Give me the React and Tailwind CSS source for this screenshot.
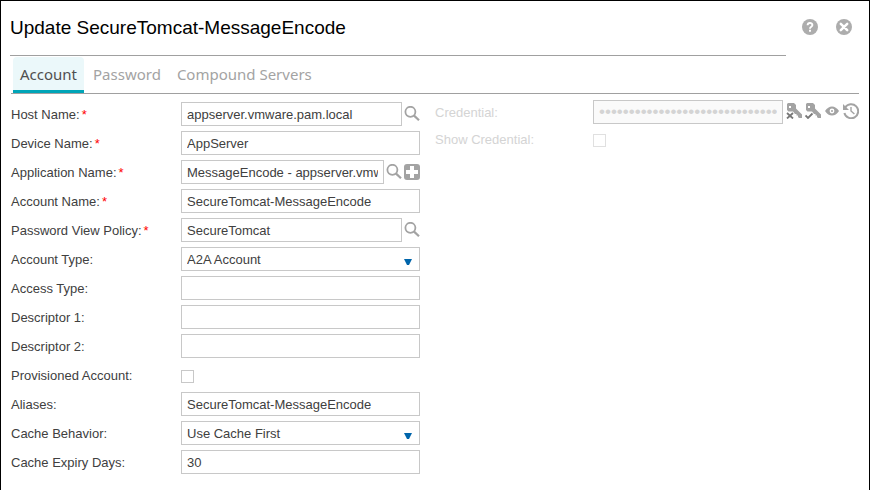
import React from 'react';

const box =
  'h-6 min-w-0 flex-1 appearance-none border border-[#c8c8c8] bg-white px-[5px] text-[13px] leading-4 text-[#404040] outline-none';

function SearchIcon() {
  return (
    <svg viewBox="0 0 16 16" className="h-4 w-4" fill="none" stroke="#a3a3a3">
      <circle cx="6.4" cy="5.8" r="5" strokeWidth="1.8" />
      <path d="M9.8 9.4 15 14.2" strokeWidth="2.2" />
    </svg>
  );
}

function PlusIcon() {
  return (
    <svg viewBox="0 0 16 16" className="h-4 w-4">
      <rect width="16" height="16" rx="3" fill="#a3a3a3" />
      <path d="M6 2h4v4h4v4h-4v4H6v-4H2V6h4z" fill="#fff" />
    </svg>
  );
}

function HelpIcon() {
  return (
    <svg viewBox="0 0 16 16" className="h-4 w-4" fill="none" stroke="#fff">
      <circle cx="8" cy="8" r="8" fill="#adadad" stroke="none" />
      <path d="M5.6 6.3C5.6 3.2 10.4 3.2 10.4 6.1C10.4 7.8 8 7.8 8 9.7" strokeWidth="1.9" />
      <path d="M8 10.8v2" strokeWidth="2" />
    </svg>
  );
}

function CloseIcon() {
  return (
    <svg viewBox="0 0 16 16" className="h-4 w-4">
      <circle cx="8" cy="8" r="8" fill="#adadad" />
      <path d="m4.8 4.8 6.4 6.4m0-6.4-6.4 6.4" stroke="#fff" strokeWidth="2.5" strokeLinecap="round" />
    </svg>
  );
}

function KeyIcon({ mark }) {
  return (
    <svg viewBox="0 0 16 16" className="h-4 w-4" fill="none">
      <path
        fill="#a3a3a3"
        d="M2 0h6l2 2v3.5l6 6V15h-3l-1-1v-1.500h-1.500V11H9L7 8.500H2.500L1 7V1z"
      />
      <path d="M3 3h2v2H3z" fill="#fff" />
      <path d={mark} stroke="#787878" strokeWidth="1.8" />
    </svg>
  );
}

function EyeIcon() {
  return (
    <svg viewBox="0 0 16 16" className="h-4 w-4">
      <path d="M1 8Q4 3.4 8 3.4T15 8Q12 12.6 8 12.6T1 8Z" fill="#a3a3a3" />
      <circle cx="8" cy="8" r="2.4" fill="#fff" />
      <circle cx="8" cy="8" r="1" fill="#a3a3a3" />
    </svg>
  );
}

function HistoryIcon() {
  return (
    <svg viewBox="0 0 16 16" className="h-4 w-4" fill="none" stroke="#a3a3a3">
      <path d="M2.2 4.6A7 7 0 1 1 1.4 10" strokeWidth="2" />
      <path d="M0 1v6h6z" fill="#a3a3a3" stroke="none" />
      <path d="M8 4v4l3.4 3" strokeWidth="1.4" />
    </svg>
  );
}

function IconButton({ label, children }) {
  return (
    <button type="button" aria-label={label} className="h-4 w-4 shrink-0">
      {children}
    </button>
  );
}

const fields = [
  { label: 'Host Name:', required: true, value: 'appserver.vmware.pam.local', search: true },
  { label: 'Device Name:', required: true, value: 'AppServer' },
  { label: 'Application Name:', required: true, value: 'MessageEncode - appserver.vmware.pam.local', search: true, add: true },
  { label: 'Account Name:', required: true, value: 'SecureTomcat-MessageEncode' },
  { label: 'Password View Policy:', required: true, value: 'SecureTomcat', search: true },
  { label: 'Account Type:', type: 'select', value: 'A2A Account' },
  { label: 'Access Type:', value: '' },
  { label: 'Descriptor 1:', value: '' },
  { label: 'Descriptor 2:', value: '' },
  { label: 'Provisioned Account:', type: 'checkbox' },
  { label: 'Aliases:', value: 'SecureTomcat-MessageEncode' },
  { label: 'Cache Behavior:', type: 'select', value: 'Use Cache First' },
  { label: 'Cache Expiry Days:', value: '30' },
];

function Control({ id, field }) {
  if (field.type === 'checkbox') {
    return <input id={id} type="checkbox" className="mt-0.5 h-[13px] w-[13px] appearance-none border border-[#c8c8c8] bg-white" />;
  }
  if (field.type === 'select') {
    return (
      <div className="relative flex flex-1">
        <select id={id} className={`${box} pt-px`} defaultValue={field.value}>
          <option>{field.value}</option>
        </select>
        <svg viewBox="0 0 8 6" className="pointer-events-none absolute right-2 bottom-1.5 h-1.5 w-2">
          <path d="M0 0h8L5 6H3z" fill="#0065ab" />
        </svg>
      </div>
    );
  }
  return <input id={id} type="text" className={box} defaultValue={field.value} />;
}

function FieldRow({ id, field }) {
  return (
    <div className="flex h-6 items-center">
      <label htmlFor={id} className="w-[170px] shrink-0 pt-0.5">
        {field.label}
        {field.required && <span className="ml-0.5 text-[#f00]">*</span>}
      </label>
      <div className="flex w-[239px] items-center gap-0.5">
        <Control id={id} field={field} />
        {field.search && <IconButton label="Search"><SearchIcon /></IconButton>}
        {field.add && <IconButton label="Add"><PlusIcon /></IconButton>}
      </div>
    </div>
  );
}

const tabs = ['Account', 'Password', 'Compound Servers'];

export default function App() {
  return (
    <main className="min-h-screen border border-black bg-white font-['Liberation_Sans',Arial,sans-serif] text-[13px] leading-4 text-[#404040]">
      <header className="flex items-center pr-[17px] pl-[9px]">
        <h1 className="flex-1 border-b border-[#a0a0a0] pt-[15px] pb-[15px] text-[19px] leading-6 text-black">
          Update SecureTomcat-MessageEncode
        </h1>
        <div className="ml-4 flex gap-[18px] pb-1">
          <IconButton label="Help"><HelpIcon /></IconButton>
          <IconButton label="Close"><CloseIcon /></IconButton>
        </div>
      </header>

      <nav
        role="tablist"
        className="mx-[10px] flex gap-0.5 border-b border-[#a0a0a0] pt-px pl-0.5 font-['Noto_Sans','Open_Sans',sans-serif] text-[15px] leading-5"
      >
        {tabs.map((tab, i) => (
          <button
            key={tab}
            type="button"
            role="tab"
            aria-selected={i === 0}
            className={
              i === 0
                ? 'rounded-t-sm border-b-[3px] border-[#00a5b8] bg-[#ebf8fa] px-[7px] pt-[7px] pb-1.5 text-[#505050]'
                : 'border-b-[3px] border-transparent px-[7px] pt-[7px] pb-1.5 text-[#a3a3a3]'
            }
          >
            {tab}
          </button>
        ))}
      </nav>

      <form className="flex items-start gap-[15px] px-[10px] pb-4">
        <div className="flex shrink-0 flex-col gap-[5px] pt-2">
          {fields.map((field, i) => (
            <FieldRow key={field.label} id={`field-${i}`} field={field} />
          ))}
        </div>

        <div className="flex min-w-0 flex-1 flex-col gap-1 pt-1.5 text-[#d4d4d4]">
          <div className="flex h-6 items-center">
            <label htmlFor="credential" className="w-[158px] shrink-0 pt-0.5">Credential:</label>
            <input
              id="credential"
              type="password"
              disabled
              defaultValue="0123456789012345678901234567890123456789"
              className="h-6 min-w-0 flex-1 border border-[#c8c8c8] bg-[#fafafa] px-[5px] text-[17px] leading-5 text-[#d4d4d4]"
            />
            <div className="ml-[3px] flex gap-[3px] pb-0.5">
              <IconButton label="Reject credential"><KeyIcon mark="M1 10l6 5.5M7 10l-6 5.5" /></IconButton>
              <IconButton label="Verify credential"><KeyIcon mark="M.5 12.5 3 15 7.5 10.5" /></IconButton>
              <IconButton label="View credential"><EyeIcon /></IconButton>
              <IconButton label="Credential history"><HistoryIcon /></IconButton>
            </div>
          </div>
          <div className="flex h-6 items-center">
            <label htmlFor="show-credential" className="w-[158px] shrink-0">Show Credential:</label>
            <input
              id="show-credential"
              type="checkbox"
              disabled
              className="h-[13px] w-[13px] appearance-none border border-[#e0e0e0] bg-white"
            />
          </div>
        </div>
      </form>
    </main>
  );
}
